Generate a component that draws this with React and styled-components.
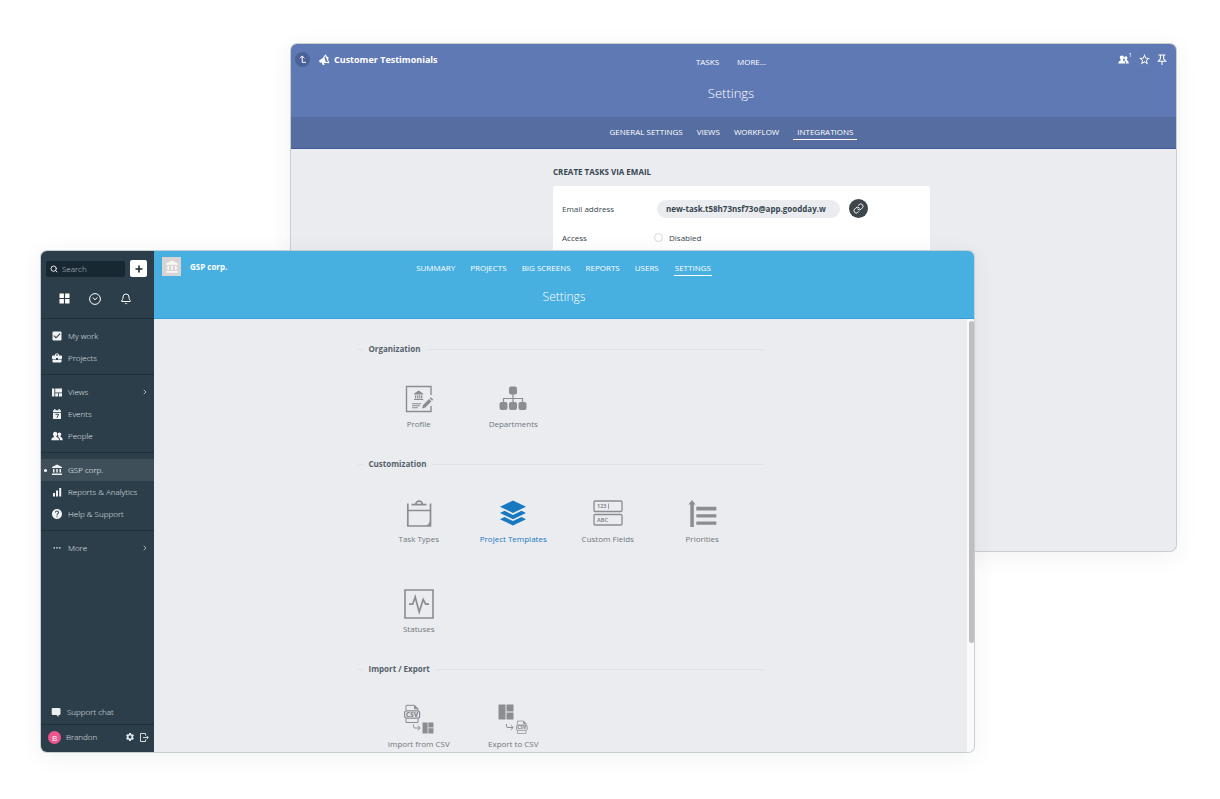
import React from 'react'
import styled, { createGlobalStyle } from 'styled-components'
import { Bell, ChevronRight, Link as LinkIcon, Search } from 'lucide-react'
import {
  MdAccountBalance,
  MdBusinessCenter,
  MdCheckBox,
  MdHelp,
  MdSettings,
  MdStarBorder,
} from 'react-icons/md'

const tabs = ['Summary', 'Projects', 'Big screens', 'Reports', 'Users', 'Settings']
const subTabs = ['General settings', 'Views', 'Workflow', 'Integrations']

const App = () => (
  <>
    <GlobalStyle />
    <Stage>
      <ProjectWindow />
      <OrganizationWindow />
    </Stage>
  </>
)

export default App

const ProjectWindow = () => (
  <BackWindow aria-label="Customer Testimonials">
    <ProjectHeader>
      <HeaderRow>
        <Brand>
          <UpButton aria-label="Up">
            <UpIcon />
          </UpButton>
          <MegaphoneIcon />
          <BrandName $large>Customer Testimonials</BrandName>
        </Brand>
        <Tabs $gap={18} $top={4}>
          <Tab href="#tasks">Tasks</Tab>
          <Tab href="#more">More...</Tab>
        </Tabs>
        <HeaderActions>
          <IconButton aria-label="Members">
            <PeopleIcon size={11} />
            <Count>1</Count>
          </IconButton>
          <IconButton aria-label="Favorite">
            <MdStarBorder size={13} />
          </IconButton>
          <IconButton aria-label="Pin">
            <PinIcon />
          </IconButton>
        </HeaderActions>
      </HeaderRow>
      <Title $large>Settings</Title>
    </ProjectHeader>
    <SubHeader>
      <Tabs $gap={14} $top={5}>
        {subTabs.map(tab => (
          <Tab
            key={tab}
            href={`#${tab}`}
            $active={tab === 'Integrations'}
            $pad={tab === 'Integrations' ? 4 : 0}
          >
            {tab}
          </Tab>
        ))}
      </Tabs>
    </SubHeader>
    <ProjectBody>
      <FormTitle>Create tasks via email</FormTitle>
      <Card>
        <Field>
          <FieldLabel htmlFor="email">Email address</FieldLabel>
          <EmailInput
            id="email"
            readOnly
            value="new-task.t58h73nsf73o@app.goodday.w"
          />
          <CopyButton aria-label="Copy link">
            <LinkIcon size={11} strokeWidth={2} />
          </CopyButton>
        </Field>
        <Field>
          <FieldLabel as="span">Access</FieldLabel>
          <RadioLabel>
            <Radio type="radio" name="access" />
            Disabled
          </RadioLabel>
        </Field>
      </Card>
    </ProjectBody>
  </BackWindow>
)

const OrganizationWindow = () => (
  <FrontWindow aria-label="GSP corp.">
    <Sidebar />
    <Main>
      <OrgHeader>
        <HeaderRow>
          <Brand>
            <OrgLogo>
              <MdAccountBalance size={14} />
            </OrgLogo>
            <BrandName>GSP corp.</BrandName>
          </Brand>
          <Tabs $gap={15} $top={5}>
            {tabs.map(tab => (
              <Tab
                key={tab}
                href={`#${tab}`}
                $active={tab === 'Settings'}
                $pad={tab === 'Settings' ? 1 : 0}
              >
                {tab}
              </Tab>
            ))}
          </Tabs>
        </HeaderRow>
        <Title>Settings</Title>
      </OrgHeader>
      <Scroller>
        <Content>
          {groups.map(group => (
            <section key={group.name}>
              <Legend>{group.name}</Legend>
              <Tiles>
                {group.tiles.map(({ label, Icon, active }) => (
                  <Tile key={label} href={`#${label}`} $active={active}>
                    <Icon />
                    {label}
                  </Tile>
                ))}
              </Tiles>
            </section>
          ))}
        </Content>
        <ScrollTrack>
          <ScrollThumb />
        </ScrollTrack>
      </Scroller>
    </Main>
  </FrontWindow>
)

const Sidebar = () => (
  <Side>
    <SearchRow>
      <SearchBox>
        <Search size={8} strokeWidth={3} />
        <SearchInput type="search" placeholder="Search" aria-label="Search" />
      </SearchBox>
      <AddButton aria-label="Add">
        <svg width="8" height="8" viewBox="0 0 8 8">
          <path d="M4 0.5v7M0.5 4h7" stroke="currentColor" strokeWidth="1.6" />
        </svg>
      </AddButton>
    </SearchRow>
    <Shortcuts>
      <IconButton aria-label="Dashboard">
        <GridIcon />
      </IconButton>
      <IconButton aria-label="Recent">
        <ClockIcon />
      </IconButton>
      <IconButton aria-label="Notifications">
        <Bell size={12} strokeWidth={2} />
      </IconButton>
    </Shortcuts>
    {menu.map((items, idx) => (
      <MenuGroup key={idx}>
        {items.map(({ label, Icon, active, more }) => (
          <MenuItem key={label} href={`#${label}`} $active={active}>
            <MenuIcon>
              <Icon size={12} />
            </MenuIcon>
            {label}
            {more && <ChevronRight size={8} strokeWidth={2} />}
          </MenuItem>
        ))}
      </MenuGroup>
    ))}
    <SupportLink href="#support">
      <ChatIcon />
      Support chat
    </SupportLink>
    <UserRow>
      <Avatar>B</Avatar>
      <UserName>Brandon</UserName>
      <IconButton aria-label="Preferences">
        <MdSettings size={10} />
      </IconButton>
      <IconButton aria-label="Log out">
        <LogoutIcon />
      </IconButton>
    </UserRow>
  </Side>
)

/* Small icons */

const UpIcon = () => (
  <svg width="8" height="9" viewBox="0 0 8 9" fill="none" stroke="currentColor">
    <path d="M1 3.2L3.2 1l2.2 2.2M3.2 1v6.3H7" />
  </svg>
)

const MegaphoneIcon = () => (
  <svg width="11" height="12" viewBox="0 0 11 12" fill="currentColor">
    <path d="M4.200 4L.3 6.300C-.1 7.300.3 8.300 1.200 8.700L2.600 8.500 4 11.300l1.500-.5-.6-2.500z" />
    <path
      d="M4.300 4.300L6.500 1l3.300 7.600-4.800-.4zM8.400 5.200c1-.5.800-2-.6-1.800"
      fill="none"
      stroke="currentColor"
      strokeWidth="1.100"
      strokeLinejoin="round"
    />
    <path d="M4.200 4l1-.9L7 8.500H4.800z" />
  </svg>
)

const PinIcon = () => (
  <svg width="10" height="11" viewBox="0 0 10 11" fill="none" stroke="currentColor">
    <path d="M1.500 1h7M3.400 1v3.800L1.300 7.200h7.400L6.600 4.800V1M5 7.200V11" strokeWidth="1.100" />
  </svg>
)

const PeopleIcon = ({ size }) => (
  <svg width={size} height={size} viewBox="0 0 11 11" fill="currentColor">
    <path d="M3.900 1.500c1.300 0 2 .9 2 2.100 0 .9-.4 1.600-.9 2v.8c1.400.5 2.400 1 2.400 3.100H.3c0-2.100 1-2.600 2.400-3.100v-.8c-.5-.4-.9-1.100-.9-2 0-1.200.8-2.100 2.100-2.100z" />
    <path d="M7.800 2.300c1 0 1.600.7 1.600 1.700 0 .7-.3 1.200-.7 1.600v.7c1.200.4 2 .9 2 3.200H8.200c0-1.600-.5-2.500-1.700-3.100l.4-.8c-.4-.4-.7-.9-.7-1.600 0-1 .6-1.700 1.600-1.700z" />
  </svg>
)

const GridIcon = () => (
  <svg width="11" height="11" viewBox="0 0 11 11" fill="currentColor">
    <path d="M.5.5h4.400v4.400H.5zM6.100.5h4.400v4.400H6.100zM.5 6.100h4.400v4.400H.5zM6.100 6.100h4.400v4.400H6.100z" />
  </svg>
)

const ClockIcon = () => (
  <svg width="12" height="12" viewBox="0 0 12 12" fill="none" stroke="currentColor">
    <circle cx="6" cy="6" r="5.400" />
    <path d="M3.700 4.600L6 6.700l2.400-2.100" />
  </svg>
)

const ViewsIcon = () => (
  <svg width="10" height="9" viewBox="0 0 10 9" fill="currentColor">
    <path d="M0 .5h2.400v8H0zM3.200.5H10v4H3.200zM3.200 5.300h2.900v3.200H3.200zM6.900 5.300H10v3.200H6.900z" />
  </svg>
)

const EventsIcon = () => (
  <svg width="10" height="10" viewBox="0 0 10 10">
    <path d="M1 1.200h8v2H1zM2.200 0h1.300v2H2.200zM6.500 0h1.300v2H6.500zM1 4h8v6H1z" fill="currentColor" />
    <path d="M3.400 5.300h3.200L4.900 8.800" fill="none" stroke="#2b3e4a" strokeWidth=".9" />
  </svg>
)

const BarsIcon = () => (
  <svg width="10" height="10" viewBox="0 0 10 10" fill="currentColor">
    <path d="M1 6h2v3.500H1zM4 3.500h2v6H4zM7.200 1h2v8.500h-2z" />
  </svg>
)

const DotsIcon = () => (
  <svg width="8" height="8" viewBox="0 0 8 8" fill="currentColor">
    <path d="M.5 3.200h1.500v1.300H.5zM3.200 3.200h1.500v1.300H3.200zM6 3.200h1.500v1.300H6z" />
  </svg>
)

const ChatIcon = () => (
  <svg width="10" height="10" viewBox="0 0 10 10" fill="currentColor">
    <path d="M1.500 1h7.200l.8.8v5.400l-.8.8H7.500v2L5.400 8H1.500l-.8-.8V1.800z" />
  </svg>
)

const LogoutIcon = () => (
  <svg width="9" height="9" viewBox="0 0 9 9" fill="none" stroke="currentColor">
    <path d="M5.500 2.500v-2h-5v8h5v-2M3 4.500h5M6.600 2.800l1.700 1.700-1.700 1.700" strokeWidth=".9" />
  </svg>
)

/* Tile icons, all on a 30px board */

const TileSvg = ({ children }) => (
  <svg width="30" height="30" viewBox="0 0 30 30" fill="currentColor" aria-hidden="true">
    {children}
  </svg>
)

const ProfileIcon = () => (
  <TileSvg>
    <path d="M27 11V2.500H2.500v25H27V22" fill="none" stroke="currentColor" strokeWidth="1.400" />
    <path d="M14.600 6.500l4.500 3v1h-9v-1zM11 11.200h1.200v3.400H11zM13.100 11.200h1.200v3.400h-1.200zM15.100 11.200h1.200v3.400h-1.200zM17.100 11.200h1.200v3.400h-1.200zM10 15h9.200v1H10z" />
    <path d="M8 19.200h9v1H8zM8 21.200h8v1H8zM8 23.200h6v1H8z" />
    <path d="M18 24.500l1-3.500 6-6 2.400 2.400-6 6zM25.600 14.300l1.100-1.100 2.500 2.400-1.100 1.100z" />
  </TileSvg>
)

const DepartmentsIcon = () => (
  <TileSvg>
    <rect x="11" y="2.500" width="8" height="8" rx="2" />
    <rect x="1.500" y="18" width="8" height="8" rx="2" />
    <rect x="11" y="18" width="8" height="8" rx="2" />
    <rect x="20.500" y="18" width="8" height="8" rx="2" />
    <path d="M15 10v8M5.500 18v-3.500h19V18" fill="none" stroke="currentColor" strokeWidth="1.200" />
  </TileSvg>
)

const TaskTypesIcon = () => (
  <TileSvg>
    <path d="M3.800 4.500V27h22.700V4.500" fill="none" stroke="currentColor" strokeWidth="1.700" />
    <path d="M4 11.500h22M7.500 5.700h15" fill="none" stroke="currentColor" strokeWidth="1.700" />
    <path d="M11.800 5.500a3.300 3.300 0 0 1 6.600 0" fill="none" stroke="currentColor" strokeWidth="1.700" />
    <path d="M26 21.500V27h-5.500c3.200-.5 4.700-2.300 5.500-5.500z" />
  </TileSvg>
)

const TemplatesIcon = () => (
  <TileSvg>
    <path d="M15 1.500l13 6.200-13 6.200L2 7.700z" />
    <path d="M2 14l4.500-2.200L15 15.900l8.500-4.100L28 14l-13 6.200z" />
    <path d="M2 20.200L6.500 18l8.500 4.100 8.500-4.100 4.500 2.200-13 6.200z" />
  </TileSvg>
)

const FieldsIcon = () => (
  <TileSvg>
    <rect x="1" y="2" width="28" height="10.500" rx="1" fill="none" stroke="currentColor" strokeWidth="1.300" />
    <rect x="1" y="15.500" width="28" height="10.500" rx="1" fill="none" stroke="currentColor" strokeWidth="1.300" />
    <text x="4" y="9.200" fontSize="5.500" fontWeight="700">123</text>
    <path d="M15.200 4.500h.8v5.500h-.8z" />
    <text x="4" y="22.800" fontSize="5.500" fontWeight="700">ABC</text>
  </TileSvg>
)

const PrioritiesIcon = () => (
  <TileSvg>
    <path d="M5 1l3.600 4.500H6.800V28H3.300V5.500H1.500zM9.300 7.800h20v3.600h-20zM9.300 15.200h20v3.400h-20zM9.300 22.400h20v3.400h-20z" />
  </TileSvg>
)

const StatusesIcon = () => (
  <TileSvg>
    <path d="M1 1h28v28H1z" fill="none" stroke="currentColor" strokeWidth="1.600" />
    <path d="M5 15.200h3.700L11.200 8l4 15 4-12.500 2.500 4.700H25" fill="none" stroke="currentColor" strokeWidth="1.700" />
  </TileSvg>
)

const CsvFile = () => (
  <g>
    <path d="M2 6V.8h8.500L14 4.300V6M2 14v4h12v-4M10.500.8v3.500H14" fill="none" stroke="currentColor" strokeWidth="1" />
    <path d="M10.500.8L14 4.300h-3.500z" />
    <rect x="0.600" y="6.300" width="15" height="7.400" rx="2" fill="none" stroke="currentColor" strokeWidth="1.200" />
    <text x="8.100" y="12.400" fontSize="6.500" fontWeight="800" textAnchor="middle">CSV</text>
  </g>
)

const Blocks = () => <path d="M0 0h7v15H0zM8 0h7v7H8zM8 8h7v7H8z" />

const ArrowPath = () => (
  <path d="M.5 0v2q0 1.500 1.500 1.500h5M4.800 1.200l2.400 2.300-2.400 2.300" fill="none" stroke="currentColor" strokeWidth="1" />
)

const ImportIcon = () => (
  <TileSvg>
    <g transform="translate(0 .5)"><CsvFile /></g>
    <g transform="translate(9 20.500)"><ArrowPath /></g>
    <g transform="translate(18.500 18.500) scale(.73)"><Blocks /></g>
  </TileSvg>
)

const ExportIcon = () => (
  <TileSvg>
    <g transform="translate(.5 .5)"><Blocks /></g>
    <g transform="translate(8 20)"><ArrowPath /></g>
    <g transform="translate(18 16.500) scale(.72)"><CsvFile /></g>
  </TileSvg>
)

const menu = [
  [
    { label: 'My work', Icon: MdCheckBox },
    { label: 'Projects', Icon: MdBusinessCenter },
  ],
  [
    { label: 'Views', Icon: ViewsIcon, more: true },
    { label: 'Events', Icon: EventsIcon },
    { label: 'People', Icon: PeopleIcon },
  ],
  [
    { label: 'GSP corp.', Icon: MdAccountBalance, active: true },
    { label: 'Reports & Analytics', Icon: BarsIcon },
    { label: 'Help & Support', Icon: MdHelp },
  ],
  [{ label: 'More', Icon: DotsIcon, more: true }],
]

const groups = [
  {
    name: 'Organization',
    tiles: [
      { label: 'Profile', Icon: ProfileIcon },
      { label: 'Departments', Icon: DepartmentsIcon },
    ],
  },
  {
    name: 'Customization',
    tiles: [
      { label: 'Task Types', Icon: TaskTypesIcon },
      { label: 'Project Templates', Icon: TemplatesIcon, active: true },
      { label: 'Custom Fields', Icon: FieldsIcon },
      { label: 'Priorities', Icon: PrioritiesIcon },
      { label: 'Statuses', Icon: StatusesIcon },
    ],
  },
  {
    name: 'Import / Export',
    tiles: [
      { label: 'Import from CSV', Icon: ImportIcon },
      { label: 'Export to CSV', Icon: ExportIcon },
    ],
  },
]

const GlobalStyle = createGlobalStyle`
  * {
    box-sizing: border-box;
  }
  body {
    margin: 0;
    background: #ffffff;
    color: #37474f;
    font-family: 'Open Sans', sans-serif;
    font-size: 8px;
    line-height: 12px;
  }
  a {
    color: inherit;
    text-decoration: none;
  }
  button, input {
    padding: 0;
    border: 0;
    background: none;
    color: inherit;
    font: inherit;
  }
  svg {
    display: block;
    flex: none;
  }
`

// The two windows share the middle cell, the front one drawn over the back one
const Stage = styled.main`
  display: grid;
  grid-template-columns: 250px 1fr 202px;
  grid-template-rows: 207px 1fr 201px;
  min-height: 100vh;
  padding: 44px 44px 47px 41px;
`

const Window = styled.article`
  display: flex;
  overflow: hidden;
  border-radius: 6px;
  background: #ebecf0;
  box-shadow: 0 0 0 1px #c9ced3, 0 4px 24px rgba(40, 60, 70, 0.07);
`

const BackWindow = styled(Window)`
  grid-area: 1 / 2 / 3 / 4;
  flex-direction: column;
`

const FrontWindow = styled(Window)`
  grid-area: 2 / 1 / 4 / 3;
  z-index: 1;
`

const ProjectHeader = styled.header`
  height: 73px;
  padding: 8px 9px 0 4px;
  background: #5f79b5;
  color: #ffffff;
`

const OrgHeader = styled.header`
  height: 68px;
  padding: 6px 8px 0;
  border-bottom: 1px solid #2fa1dc;
  background: #48afe1;
  color: #ffffff;
`

const HeaderRow = styled.div`
  display: grid;
  grid-template-columns: 1fr auto 1fr;
  align-items: start;
`

const Brand = styled.div`
  display: flex;
  align-items: center;
`

const BrandName = styled.span`
  margin-left: ${props => (props.$large ? 4 : 9)}px;
  font-size: ${props => (props.$large ? 9 : 8)}px;
  font-weight: bold;
`

const OrgLogo = styled.div`
  display: flex;
  align-items: center;
  justify-content: center;
  width: 19px;
  height: 19px;
  background: #d8d4d4;
  color: #f7f7f7;
`

const UpButton = styled.button`
  display: flex;
  align-items: center;
  justify-content: center;
  width: 15px;
  height: 15px;
  margin-right: 9px;
  border-radius: 50%;
  background: #4b6296;
`

const Tabs = styled.nav`
  display: flex;
  justify-content: center;
  gap: ${props => props.$gap}px;
  padding-top: ${props => props.$top}px;
`

const Tab = styled.a`
  padding: 0 ${props => props.$pad || 0}px 1px;
  border-bottom: 1px solid ${props => (props.$active ? '#ffffff' : 'transparent')};
  text-transform: uppercase;
  white-space: nowrap;
`

const HeaderActions = styled.div`
  display: flex;
  align-items: center;
  justify-content: flex-end;
  gap: 6px;
  height: 15px;
`

const IconButton = styled.button`
  display: flex;
  align-items: center;
`

const Count = styled.sup`
  align-self: flex-start;
  margin-top: -2px;
  font-size: 6px;
  line-height: 6px;
`

const Title = styled.h1`
  margin: ${props => (props.$large ? 15 : 13)}px 0 0;
  font-size: ${props => (props.$large ? 13 : 12)}px;
  font-weight: 300;
  line-height: 16px;
  text-align: center;
`

const SubHeader = styled.div`
  height: 32px;
  padding-top: 4px;
  border-bottom: 1px solid #40589a;
  background: #566da1;
  color: #ffffff;
`

const ProjectBody = styled.div`
  width: 393px;
  margin: 0 auto;
  padding: 17px 0 0 16px;
`

const FormTitle = styled.h2`
  margin: 0 0 8px;
  font-size: 8px;
  font-weight: bold;
  text-transform: uppercase;
`

const Card = styled.div`
  padding: 13px 9px 80px;
  border-radius: 2px;
  background: #ffffff;
`

const Field = styled.div`
  display: flex;
  align-items: center;
  height: 19px;
  margin-bottom: 10px;
`

const FieldLabel = styled.label`
  width: 95px;
`

const EmailInput = styled.input`
  width: 183px;
  height: 18px;
  padding: 0 9px;
  border-radius: 9px;
  background: #ebecf0;
  font-weight: bold;
`

const CopyButton = styled.button`
  display: flex;
  align-items: center;
  justify-content: center;
  width: 19px;
  height: 19px;
  margin-left: 9px;
  border-radius: 50%;
  background: #3f464b;
  color: #ffffff;
`

const RadioLabel = styled.label`
  display: flex;
  align-items: center;
  gap: 6px;
`

const Radio = styled.input`
  width: 9px;
  height: 9px;
  margin: 0 0 0 -3px;
  border: 1px solid #d5d7da;
  border-radius: 50%;
  appearance: none;
`

const Side = styled.aside`
  display: flex;
  flex: none;
  flex-direction: column;
  width: 113px;
  background: #2b3e4a;
  color: #e6eaec;
  font-weight: 300;
`

const SearchRow = styled.div`
  display: flex;
  align-items: center;
  justify-content: space-between;
  padding: 9px 7px 0 5px;
`

const SearchBox = styled.div`
  display: flex;
  align-items: center;
  gap: 4px;
  width: 79px;
  height: 16px;
  padding-left: 4px;
  border-radius: 2px;
  background: #172833;
`

const SearchInput = styled.input`
  width: 60px;
  outline: 0;
  appearance: none;
  &::placeholder {
    color: #c3cacf;
    opacity: 1;
  }
`

const AddButton = styled.button`
  display: flex;
  align-items: center;
  justify-content: center;
  width: 17px;
  height: 17px;
  border-radius: 2px;
  background: #ffffff;
  color: #172833;
`

const Shortcuts = styled.div`
  display: flex;
  align-items: center;
  gap: 19px;
  height: 41px;
  padding: 2px 0 0 18px;
  color: #ffffff;
`

const MenuGroup = styled.nav`
  padding: 6px 0 5px;
  border-top: 1px solid #1f303b;
`

const MenuItem = styled.a`
  position: relative;
  display: flex;
  align-items: center;
  height: 22px;
  padding: 0 5px 0 11px;
  background: ${props => (props.$active ? '#3e4f5a' : 'transparent')};
  color: ${props => (props.$active ? '#ffffff' : 'inherit')};

  > svg {
    margin-left: auto;
  }

  &::before {
    content: '';
    position: absolute;
    left: 3px;
    width: 3px;
    height: 3px;
    border-radius: 50%;
    background: ${props => (props.$active ? '#ffffff' : 'transparent')};
  }
`

const MenuIcon = styled.span`
  display: flex;
  justify-content: center;
  width: 10px;
  margin-right: 6px;
  color: #f0f2f3;
`

const SupportLink = styled.a`
  display: flex;
  align-items: center;
  gap: 6px;
  margin-top: auto;
  padding: 0 10px 6px;

  svg {
    color: #eceef0;
  }
`

const UserRow = styled.div`
  display: flex;
  align-items: center;
  gap: 5px;
  height: 28px;
  padding: 0 5px 3px 7px;
  border-top: 1px solid #1f303b;
`

const Avatar = styled.span`
  width: 13px;
  height: 13px;
  border-radius: 50%;
  background: #f0568e;
  color: #ffffff;
  font-weight: normal;
  line-height: 13px;
  text-align: center;
`

const UserName = styled.span`
  flex: 1;
`

const Main = styled.div`
  display: flex;
  flex: 1;
  flex-direction: column;
`

const Scroller = styled.div`
  display: flex;
  flex: 1;
`

const Content = styled.div`
  display: flex;
  flex: 0 1 406px;
  flex-direction: column;
  gap: 28px;
  margin: 0 auto;
  padding: 24px 0 2px;
`

const ScrollTrack = styled.div`
  width: 7px;
  padding: 2px 0 2px 2px;
  background: #fafafa;
`

const ScrollThumb = styled.div`
  height: 75%;
  border-radius: 3px;
  background: #bfbfbf;
`

const Legend = styled.h2`
  display: flex;
  align-items: center;
  gap: 6px;
  margin: 0 0 29px;
  color: #56626a;
  font-size: 8px;
  font-weight: bold;

  &::before,
  &::after {
    content: '';
    width: 5px;
    height: 1px;
    background: #e0e2e6;
  }
  &::after {
    flex: 1;
  }
`

const Tiles = styled.div`
  display: grid;
  grid-template-columns: repeat(4, 1fr);
  row-gap: 44px;
  padding: 0 14px;
`

const Tile = styled.a`
  display: flex;
  flex-direction: column;
  align-items: center;
  gap: 4px;
  color: ${props => (props.$active ? '#1878c0' : '#6f777c')};
  white-space: nowrap;

  svg {
    color: ${props => (props.$active ? '#1878c0' : '#8b8d90')};
  }
`
